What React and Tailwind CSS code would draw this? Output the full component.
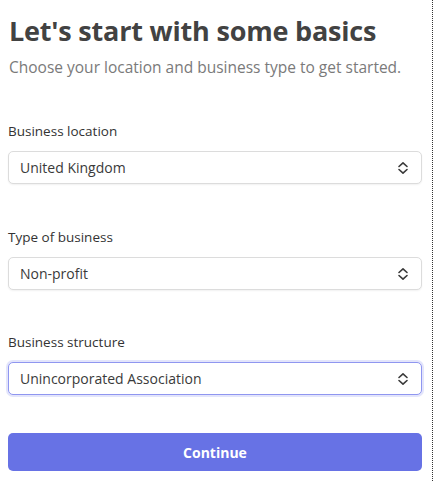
import React from "react";

const font = { fontFamily: '"Open Sans", "Noto Sans", sans-serif' };

function Chevrons() {
  return (
    <svg width="12" height="14" viewBox="0 0 12 14" fill="none" stroke="#3a3a3a" strokeWidth="1.6" strokeLinecap="round" strokeLinejoin="round">
      <path d="M2 5.5 L6 1.8 L10 5.5" />
      <path d="M2 8.5 L6 12.2 L10 8.5" />
    </svg>
  );
}

function Field({ label, value, focused, mt }) {
  return (
    <div className={mt}>
      <div className="text-[13.5px] leading-[18px] font-medium text-[#333333]">{label}</div>
      <div
        className={
          "mt-[11px] h-[33px] rounded-[5px] bg-white flex items-center justify-between pl-[11px] pr-[12px] " +
          (focused
            ? "border border-[#8f96f0] shadow-[0_0_0_2px_rgba(143,150,240,0.25)]"
            : "border border-[#dcdcdc] shadow-[0_1px_2px_rgba(0,0,0,0.06)]")
        }
      >
        <span className="text-[14px] font-medium text-[#3a3a3a]">{value}</span>
        <Chevrons />
      </div>
    </div>
  );
}

export default function App() {
  return (
    <div className="w-[433px] h-[481px] bg-white border-r border-dotted border-[#333]" style={font}>
      <div className="pl-[8px] pr-[10px] pt-[12px]">
        <h1 className="text-[27px] leading-[38px] font-bold text-[#424242] pl-[1px] tracking-[-0.2px]">
          Let's start with some basics
        </h1>
        <p className="mt-[7px] text-[15.5px] leading-[20px] text-[#7a7a7a] pl-[1px]">
          Choose your location and business type to get started.
        </p>
        <Field label="Business location" value="United Kingdom" mt="mt-[45px]" />
        <Field label="Type of business" value="Non-profit" mt="mt-[44px]" />
        <Field label="Business structure" value="Unincorporated Association" focused mt="mt-[43px]" />
        <button className="mt-[38px] w-full h-[38px] rounded-[5px] bg-[#6772e5] text-white text-[14px] font-bold">
          Continue
        </button>
      </div>
    </div>
  );
}
